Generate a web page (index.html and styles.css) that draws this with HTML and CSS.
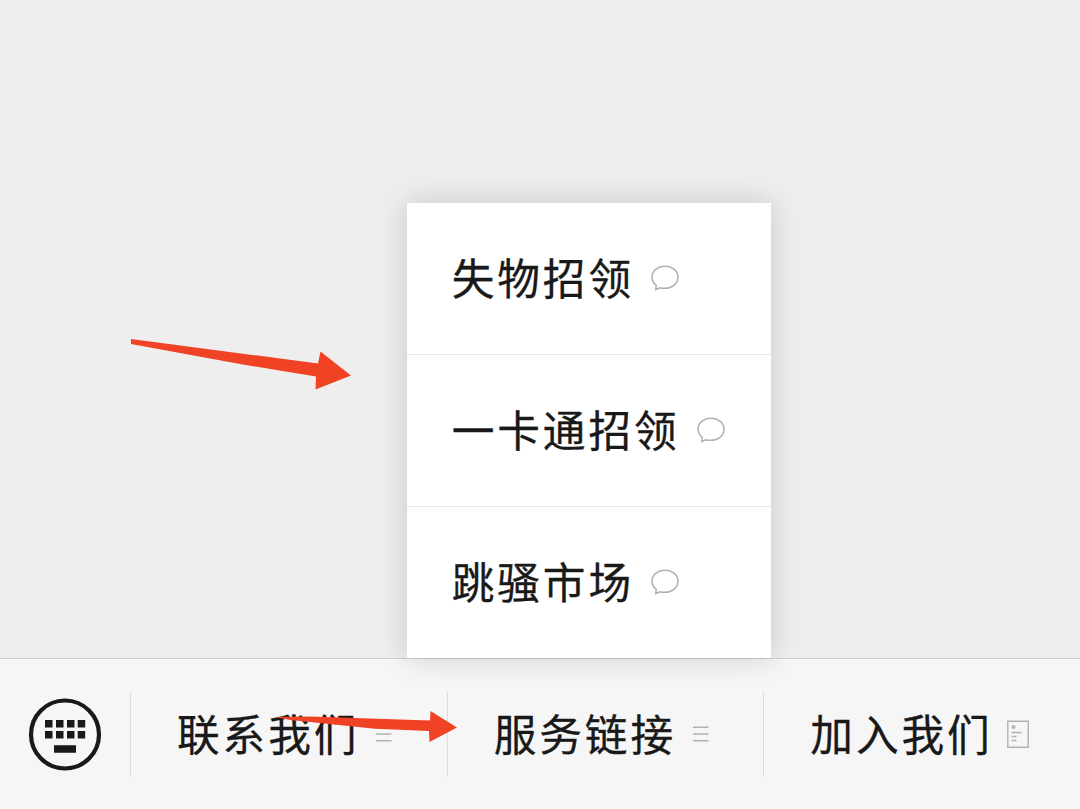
FILE: index.html
```
<!DOCTYPE html>
<html lang="zh-CN">
<head>
  <meta charset="UTF-8">
  <title>服务链接</title>
  <link rel="stylesheet" href="styles.css">
</head>
<body>

  <main class="chat"></main>

  <footer class="bar">
    <div class="keyboard">
      <svg width="74" height="74" viewBox="0 0 74 74">
        <circle cx="37" cy="37.500" r="34" fill="none" stroke="#191919" stroke-width="4.2"/>
        <path fill="#191919" d="M17 23h7.500v7.500h-7.500zM28 23h7.500v7.500h-7.500zM39 23h7.500v7.500h-7.500zM49.700 23h7.500v7.500h-7.500zM17 34h7.500v7.500h-7.500zM28 34h7.500v7.500h-7.500zM39 34h7.500v7.500h-7.500zM49.700 34h7.500v7.500h-7.500zM26 48.300h22v7.500h-22z"/>
      </svg>
    </div>
    <div class="tab">
      <span class="label">联系我们</span>
      <svg class="lines" width="16" height="16" viewBox="0 0 16 16"><path d="M0 1.200h15.500M0 8h15.500M0 14.800h15.500"/></svg>
    </div>
    <div class="tab">
      <span class="label">服务链接</span>
      <svg class="lines" width="16" height="16" viewBox="0 0 16 16"><path d="M0 1.200h15.500M0 8h15.500M0 14.800h15.500"/></svg>
      <div class="menu">
        <div class="item">
          <span class="label">失物招领</span>
          <svg class="bubble" width="28" height="26" viewBox="0 0 28 26"><path d="M5.200 20.300C2.600 18.200 1 15.400 1 12.300 1 6.100 6.800 1.200 14 1.200s13 4.900 13 11.100S21.200 23.300 14 23.300c-1.800 0-3.600-.1-5.200-.6l-4 1.800z"/></svg>
        </div>
        <div class="item">
          <span class="label">一卡通招领</span>
          <svg class="bubble" width="28" height="26" viewBox="0 0 28 26"><path d="M5.200 20.300C2.600 18.200 1 15.400 1 12.300 1 6.100 6.800 1.200 14 1.200s13 4.900 13 11.100S21.200 23.300 14 23.300c-1.800 0-3.600-.1-5.200-.6l-4 1.800z"/></svg>
        </div>
        <div class="item">
          <span class="label">跳骚市场</span>
          <svg class="bubble" width="28" height="26" viewBox="0 0 28 26"><path d="M5.200 20.300C2.600 18.200 1 15.400 1 12.300 1 6.100 6.800 1.200 14 1.200s13 4.900 13 11.100S21.200 23.300 14 23.300c-1.800 0-3.600-.1-5.200-.6l-4 1.800z"/></svg>
        </div>
      </div>
    </div>
    <div class="tab">
      <span class="label">加入我们</span>
      <svg class="doc" width="22" height="28" viewBox="0 0 22 28">
        <path d="M.8 1.200h20.400v26H.8zM4.500 12.500h10M4.500 16.500h5M4.500 20.500h5"/>
        <circle cx="6.500" cy="7" r="2"/>
      </svg>
    </div>
  </footer>

  <!-- arrows drawn on top of the screen -->
  <svg class="arrows" width="1080" height="809" viewBox="0 0 1080 809">
    <path d="M131 339L318 363.500 320.500 351.500 351 375.500 315.500 389.500 316 376.500 240 364 131 344z"/>
    <path d="M275 717L310 716.500 430 720.500 430.500 711 457 727.500 429.500 742 429 731 375 728.800 310 722 290 720z"/>
  </svg>

</body>
</html>
```
FILE: styles.css
```
body {
  margin: 0;
  height: 809px;
  display: flex;
  flex-direction: column;
  overflow: hidden;
  background: #eeeeee;
  color: #191919;
  font-family: "Noto Sans CJK SC", sans-serif;
}
.chat {
  flex: 1;
}
.bar {
  display: flex;
  align-items: center;
  height: 151px;
  box-sizing: border-box;
  border-top: 1px solid #cfcfcf;
  background: #f6f6f6;
}
.keyboard {
  width: 130px;
  box-sizing: border-box;
  padding-left: 28px;
  display: flex;
}
.tab {
  position: relative;
  display: flex;
  align-items: center;
  flex: 1;
  height: 85px;
  box-sizing: border-box;
  padding-left: 46px;
  border-left: 1px solid #dcdcdc;
}
.label {
  font-size: 42.7px;
  line-height: 60px;
  padding-bottom: 4px;
  letter-spacing: 2.9px;
  -webkit-text-stroke: 0.3px #191919;
  white-space: nowrap;
}
.lines {
  margin-left: 17px;
  fill: none;
  stroke: #b2b2b2;
  stroke-width: 1.6;
}
.tab:nth-child(2) .lines {
  margin-left: 16.5px;
}
.doc {
  margin-left: 14px;
  fill: none;
  stroke: #b0b0b0;
  stroke-width: 1.4;
}
.doc circle {
  fill: #b0b0b0;
  stroke: none;
}

/* popup above the middle tab */
.menu {
  position: absolute;
  left: -41px;
  bottom: 119px;
  width: 364px;
  background: #fff;
  box-shadow: 0 0 28px rgba(0, 0, 0, 0.17);
}
.item {
  display: flex;
  align-items: center;
  height: 151px;
  box-sizing: border-box;
  padding-left: 45px;
}
.item + .item {
  height: 152px;
  border-top: 1px solid #e8e8e8;
}
.bubble {
  margin-left: 17px;
  fill: none;
  stroke: #b0b0b0;
  stroke-width: 1.5;
}

.arrows {
  position: absolute;
  left: 0;
  top: 0;
  fill: #f04325;
}
```
